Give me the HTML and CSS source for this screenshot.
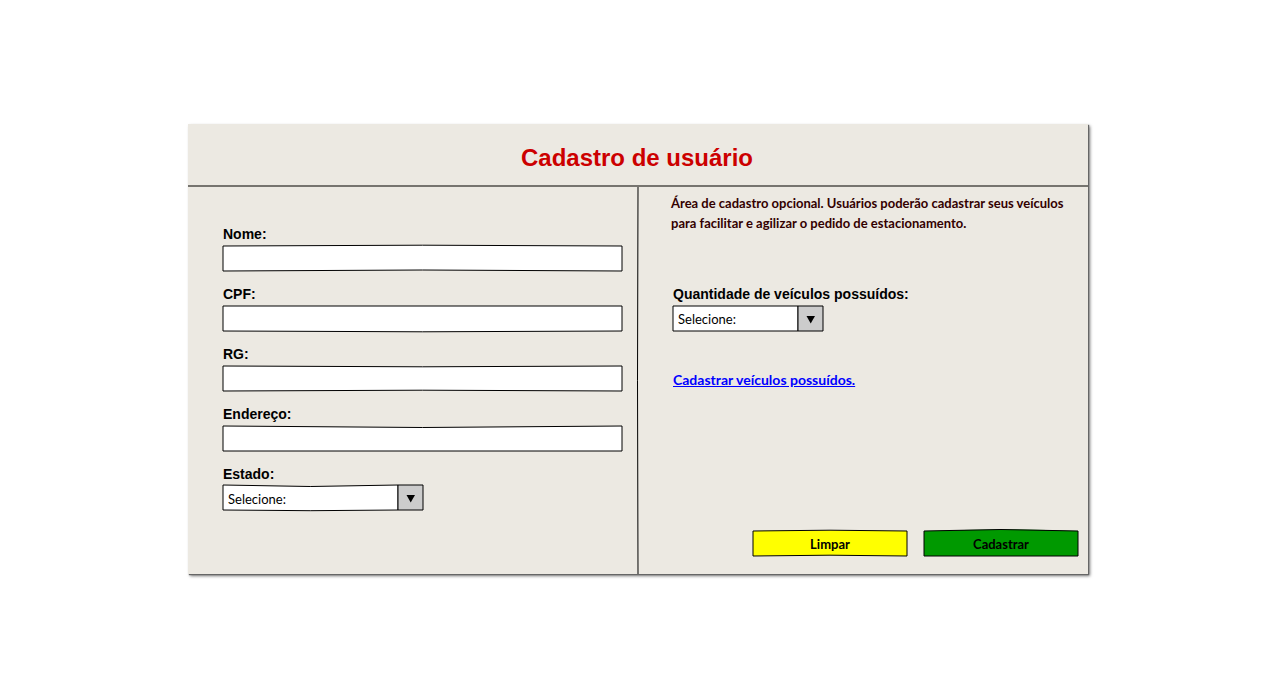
FILE: index.html
```html
<!DOCTYPE html>
<html lang="pt-BR">
<head>
<meta charset="utf-8">
<meta name="viewport" content="width=device-width, initial-scale=1">
<title>Cadastro de usuário</title>
<link rel="stylesheet" href="styles.css">
</head>
<body>
<main class="card">
  <header class="card-header"><h1 class="title">Cadastro de usuário</h1></header>
  <form class="columns">
    <section class="person">
      <div class="field">
        <label class="label" for="nome">Nome:</label>
        <div class="sketch">
          <svg class="outline" viewBox="0 0 400 25" preserveAspectRatio="none" aria-hidden="true"><path d="M0 0Q200 -1.6 400 0V25Q200 23 0 25Z"/></svg>
          <input class="control" id="nome" type="text">
        </div>
      </div>
      <div class="field">
        <label class="label" for="cpf">CPF:</label>
        <div class="sketch">
          <svg class="outline" viewBox="0 0 400 25" preserveAspectRatio="none" aria-hidden="true"><path d="M0 0H400V25Q200 26.6 0 25Z"/></svg>
          <input class="control" id="cpf" type="text">
        </div>
      </div>
      <div class="field">
        <label class="label" for="rg">RG:</label>
        <div class="sketch">
          <svg class="outline" viewBox="0 0 400 25" preserveAspectRatio="none" aria-hidden="true"><path d="M0 0Q200 1.6 400 0V25Q200 23.4 0 25Z"/></svg>
          <input class="control" id="rg" type="text">
        </div>
      </div>
      <div class="field">
        <label class="label" for="endereco">Endereço:</label>
        <div class="sketch">
          <svg class="outline" viewBox="0 0 400 25" preserveAspectRatio="none" aria-hidden="true"><path d="M0 0Q200 3 400 0V25H0Z"/></svg>
          <input class="control" id="endereco" type="text">
        </div>
      </div>
      <div class="field">
        <label class="label" for="estado">Estado:</label>
        <div class="sketch state">
          <svg class="outline" viewBox="0 0 200 25" preserveAspectRatio="none" aria-hidden="true"><path d="M0 -1Q87 2 175 -1V24Q87 25.4 0 24Z"/><path class="arrow-box" d="M175 -1H200V24H175Z"/><path class="arrow" d="M183.500 9H192L187.700 16.500Z"/></svg>
          <select class="control" id="estado"><option>Selecione:</option></select>
        </div>
      </div>
    </section>
    <svg class="divider" viewBox="0 0 2 387" preserveAspectRatio="none" aria-hidden="true"><path d="M1 0Q0 193 1 387"/></svg>
    <section class="vehicles">
      <p class="note">Área de cadastro opcional. Usuários poderão cadastrar seus veículos para facilitar e agilizar o pedido de estacionamento.</p>
      <div class="field quantity">
        <label class="label" for="quantidade">Quantidade de veículos possuídos:</label>
        <div class="sketch amount">
          <svg class="outline" viewBox="0 0 150 25" preserveAspectRatio="none" aria-hidden="true"><path d="M0 0H125V25H0Z"/><path class="arrow-box" d="M125 0H150V25H125Z"/><path class="arrow" d="M133.500 10H142L137.700 17.500Z"/></svg>
          <select class="control" id="quantidade"><option>Selecione:</option></select>
        </div>
      </div>
      <a class="link" href="#veiculos">Cadastrar veículos possuídos.</a>
      <div class="actions">
        <div class="sketch">
          <svg class="outline yellow" viewBox="0 0 154 25" preserveAspectRatio="none" aria-hidden="true"><path d="M0 0Q77 -1.600 154 0V25Q77 23.400 0 25Z"/></svg>
          <button class="control button" type="reset">Limpar</button>
        </div>
        <div class="sketch">
          <svg class="outline green" viewBox="0 0 154 25" preserveAspectRatio="none" aria-hidden="true"><path d="M0 0Q77 -3 154 0V25H0Z"/></svg>
          <button class="control button" type="submit">Cadastrar</button>
        </div>
      </div>
    </section>
  </form>
</main>
</body>
</html>
```
FILE: styles.css
```css
* { box-sizing: border-box; }
body {
  margin: 0;
  min-height: 100vh;
  padding: 2px 0 0 6px;
  display: grid;
  align-content: center;
  justify-items: center;
  background: #fff;
  color: #000;
  font-family: "Liberation Sans", Arial, sans-serif;
}
.card {
  width: 100%;
  max-width: 900px;
  background: #ece9e2;
  box-shadow: 1px 1px 1px #666, 2px 2px 3px #777;
}
.card-header {
  padding: 20px 2px 13px 0;
  border-bottom: 2px solid #76746f;
}
.title {
  margin: 0;
  text-align: center;
  color: #c00;
  font-size: 24px;
  line-height: 28px;
}
.columns {
  display: grid;
  grid-template-columns: 1fr 2px 1fr;
}
.person {
  display: grid;
  gap: 13px;
  padding: 37px 15px 63px 35px;
}
.label {
  display: block;
  margin-bottom: 2px;
  font-size: 14px;
  line-height: 20px;
  font-weight: bold;
}
.sketch {
  display: grid;
  height: 25px;
}
.state { width: 200px; }
.amount { width: 150px; }
.outline, .control {
  grid-area: 1 / 1;
  width: 100%;
  height: 25px;
}
.outline {
  overflow: visible;
  fill: #fff;
  stroke: #000;
  stroke-width: 1px;
}
.outline path { vector-effect: non-scaling-stroke; }
.outline .arrow-box { fill: #ccc; }
.outline .arrow { fill: #000; stroke: none; }
.yellow { fill: #ff0; }
.green { fill: #090; }
.control {
  margin: 0;
  padding: 0 5px;
  border: 0;
  appearance: none;
  background: transparent;
  color: #000;
  font-family: "Comic Sans MS", Lato, sans-serif;
  font-size: 13px;
  z-index: 1;
}
.divider {
  width: 2px;
  height: 100%;
  min-height: 0;
  overflow: visible;
  fill: none;
  stroke: #000;
  stroke-width: 1px;
}
.vehicles {
  display: flex;
  flex-direction: column;
  padding: 6px 10px 18px 32px;
}
.note {
  margin: 0;
  color: #300;
  font-family: "Comic Sans MS", Lato, sans-serif;
  font-size: 13px;
  font-weight: bold;
  line-height: 20px;
}
.quantity { margin: 51px 0 0 2px; }
.link {
  align-self: flex-start;
  margin: 39px 0 0 2px;
  color: #00f;
  font-family: "Comic Sans MS", Lato, sans-serif;
  font-size: 14px;
  font-weight: bold;
  line-height: 20px;
}
.actions {
  display: grid;
  grid-template-columns: 154px 154px;
  gap: 17px;
  justify-content: end;
  margin-top: auto;
}
.button {
  font-weight: bold;
  text-align: center;
}
```
